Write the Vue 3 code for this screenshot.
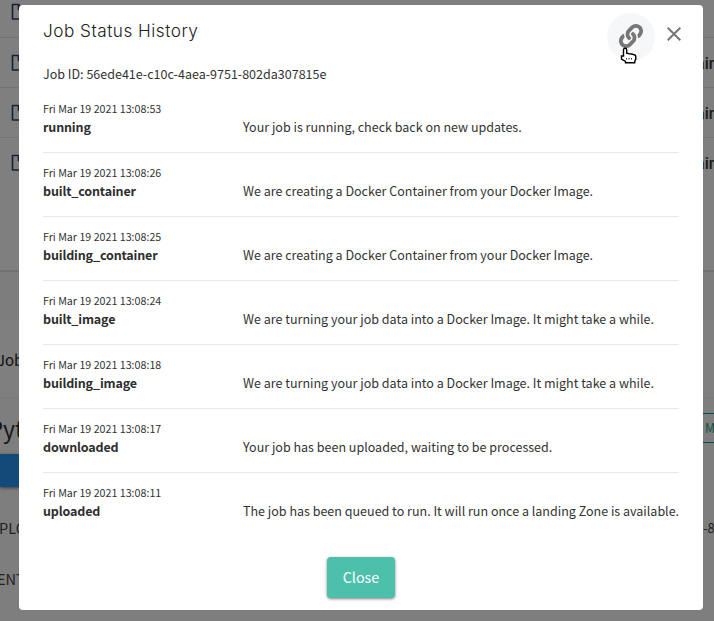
<script setup>
const files = [0, 1, 2, 3]
const docker = 'We are creating a Docker Container from your Docker Image.'
const turning = 'We are turning your job data into a Docker Image. It might take a while.'
const history = [
  { time: '13:08:53', status: 'running', text: 'Your job is running, check back on new updates.' },
  { time: '13:08:26', status: 'built_container', text: docker },
  { time: '13:08:25', status: 'building_container', text: docker },
  { time: '13:08:24', status: 'built_image', text: turning },
  { time: '13:08:18', status: 'building_image', text: turning },
  { time: '13:08:17', status: 'downloaded', text: 'Your job has been uploaded, waiting to be processed.' },
  { time: '13:08:11', status: 'uploaded', text: 'The job has been queued to run. It will run once a landing Zone is available.' },
]
</script>

<template>
  <div class="screen">
    <div class="page">
      <section class="files">
        <div v-for="f in files" :key="f" class="file-row">
          <svg width="16" height="18" viewBox="0 0 16 18" fill="none" stroke="#27446a" stroke-width="1.6" stroke-linejoin="round">
            <path d="M2.500 1.500h6l5 5v9.500h-11zM8.500 1.500v5h5" />
          </svg>
          <b v-if="f">ain</b>
        </div>
      </section>
      <section class="job-head"><span>Job</span></section>
      <section class="detail">
        <div class="detail-title"><span class="py">Pyt</span><span class="more">M</span></div>
        <div class="tab"></div>
        <div class="prop"><span>PLO</span><span class="val">-8</span></div>
        <div class="prop ent"><span>ENT</span></div>
      </section>
    </div>
    <div class="overlay">
      <div class="modal">
        <header>
          <h1>Job Status History</h1>
          <button class="link">
            <svg width="24" height="24" viewBox="0 0 512 512" fill="#777">
              <path d="M326.612 185.391c59.747 59.809 58.927 155.698.36 214.59-.11.12-.24.25-.36.37l-67.2 67.2c-59.27 59.27-155.699 59.262-214.96 0-59.27-59.26-59.27-155.7 0-214.96l37.106-37.106c9.84-9.84 26.786-3.3 27.294 10.606.648 17.722 3.826 35.527 9.69 52.721 1.986 5.822.567 12.262-3.783 16.612l-13.087 13.087c-28.026 28.026-28.905 73.66-1.155 101.96 28.024 28.579 74.086 28.749 102.325.51l67.2-67.19c28.191-28.191 28.073-73.757 0-101.83-3.701-3.694-7.429-6.564-10.341-8.569a16.037 16.037 0 0 1-6.947-12.606c-.396-10.567 3.348-21.456 11.698-29.806l21.054-21.055c5.521-5.521 14.182-6.199 20.584-1.731a152.482 152.482 0 0 1 20.522 17.197zM467.547 44.449c-59.261-59.262-155.69-59.27-214.96 0l-67.2 67.2c-.12.12-.25.25-.36.37-58.566 58.892-59.387 154.781.36 214.59a152.454 152.454 0 0 0 20.521 17.196c6.402 4.468 15.064 3.789 20.584-1.731l21.054-21.055c8.35-8.35 12.094-19.239 11.698-29.806a16.037 16.037 0 0 0-6.947-12.606c-2.912-2.005-6.64-4.875-10.341-8.569-28.073-28.073-28.191-73.639 0-101.83l67.2-67.19c28.239-28.239 74.3-28.069 102.325.51 27.75 28.3 26.872 73.934-1.155 101.96l-13.087 13.087c-4.35 4.35-5.769 10.79-3.783 16.612 5.864 17.194 9.042 34.999 9.69 52.721.509 13.906 17.454 20.446 27.294 10.606l37.106-37.106c59.271-59.259 59.271-155.699.001-214.959z" />
            </svg>
          </button>
          <button class="x">
            <svg width="14" height="14" viewBox="0 0 14 14" stroke="#777" stroke-width="2"><path d="M.7.7l12.6 12.6M13.3.7L.7 13.3" /></svg>
          </button>
        </header>
        <p class="job-id">Job ID: 56ede41e-c10c-4aea-9751-802da307815e</p>
        <ul>
          <li v-for="h in history" :key="h.time">
            <time>Fri Mar 19 2021 {{ h.time }}</time>
            <div class="line"><strong>{{ h.status }}</strong><span>{{ h.text }}</span></div>
          </li>
        </ul>
        <footer><button class="close">Close</button></footer>
      </div>
    </div>
    <svg class="cursor" width="18" height="18" viewBox="0 0 18 18">
      <path d="M5 1.200c1 0 1.700.6 1.700 1.500v3.500l2.600.5 2.500.3 2.400.8c1.200.2 1.600.8 1.600 2v2.400l-1 1.800v1.800H5.500v-1.500L1.500 12V9h2V2.700C3.500 1.800 4 1.200 5 1.200z" fill="#fff" stroke="#000" stroke-width="1.400" />
      <path d="M6.500 11v1.500M9 11v1.500M11.500 11v1.500" stroke="#333" />
    </svg>
  </div>
</template>

<style>
body { margin: 0; overflow: hidden; }
</style>
<style scoped>
* { box-sizing: border-box; }
.screen { position: relative; width: 714px; height: 621px; overflow: hidden; font-family: "Noto Sans CJK SC", "Noto Sans", sans-serif; color: #333; font-size: 13.5px; }
.page { width: 714px; height: 621px; background: #fafafa; overflow: hidden; }
.files { height: 272px; background: #fff; border-bottom: 2px solid #e2e2e2; }
.file-row { height: 50px; border-bottom: 1px solid #e6e6e6; display: flex; align-items: center; justify-content: space-between; padding-left: 10px; }
.file-row:first-child { height: 38px; padding-bottom: 13px; }
.file-row:last-child { border: 0; }
.file-row b { width: 18px; padding-top: 1px; font: 500 16px Roboto, sans-serif; color: #353b45; }
.job-head { margin-top: 48px; height: 77px; background: #fff; line-height: 79px; font-size: 15px; color: #222; }
.job-head span { margin-left: -3px; }
.detail { background: #fcfcfc; height: 224px; border-top: 1px solid #eee; }
.detail-title { height: 56px; display: flex; justify-content: space-between; align-items: center; padding-top: 6px; }
.py { font-size: 23px; margin-left: -11.500px; line-height: 48px; margin-top: -3px; }
.more { width: 11px; height: 30px; margin-bottom: 2px; border: 1px solid #0b9c88; border-left: 0; border-right: 0; color: #16a18e; line-height: 27px; padding-left: 2px; font-size: 12.500px; box-shadow: -8px 0 0 -0px #fcfcfc; }
.tab { width: 120px; height: 33px; background: #2496f3; box-shadow: 0 1px 3px #777; }
.prop { height: 51px; display: flex; justify-content: space-between; align-items: center; margin-top: 15px; color: #444; font-size: 14.500px; }
.prop span:first-child { margin-left: -1px; }
.prop .val { width: 11px; font-size: 13px; }
.ent { margin-top: 0; }
.prop.ent span { margin-left: -3px; }
.overlay { position: absolute; inset: 0; background: rgba(0, 0, 0, .5); padding: 5px 11px 0 19px; }
.modal { height: 605px; width: 684px; background: #fff; border-radius: 4px; padding: 8px 24px 0; }
header { display: flex; height: 48px; align-items: flex-start; }
h1 { margin: 5px auto 0 0; font: 300 17.200px/26px Inter, sans-serif; letter-spacing: .5px; color: #222; }
button { border: 0; padding: 0; background: none; display: flex; align-items: center; justify-content: center; }
.link { width: 48px; height: 48px; border-radius: 50%; background: #f6f7f9; padding-bottom: 2px; }
.x { width: 14px; margin: 14px -2px 0 12px; height: 14px; }
.job-id { margin: 0; height: 26px; line-height: 25px; font-size: 12.520px; }
ul { list-style: none; margin: 12px 0 0; padding: 0; }
li { height: 64px; border-bottom: 1px solid #e8e8e8; padding-top: 10px; }
li:first-child { height: 54px; padding-top: 0; }
li:last-child { border: 0; }
time { display: block; height: 19px; line-height: 20px; font-size: 10.700px; white-space: nowrap; }
.line { display: flex; height: 18px; line-height: 18px; white-space: nowrap; font-size: 12.520px; }
strong { width: 200px; flex: none; font-weight: 700; letter-spacing: -.15px; color: #2d2d2d; }
footer { display: flex; justify-content: center; margin-top: 20px; }
.close { width: 68px; height: 41px; border-radius: 4px; background: #4dc0ab; color: #fff; font: 400 14.350px "Noto Sans CJK SC", sans-serif; padding-bottom: 3px; box-shadow: 0 1px 3px rgba(0,0,0,.5); }
.cursor { position: absolute; left: 620px; top: 47px; }
</style>
